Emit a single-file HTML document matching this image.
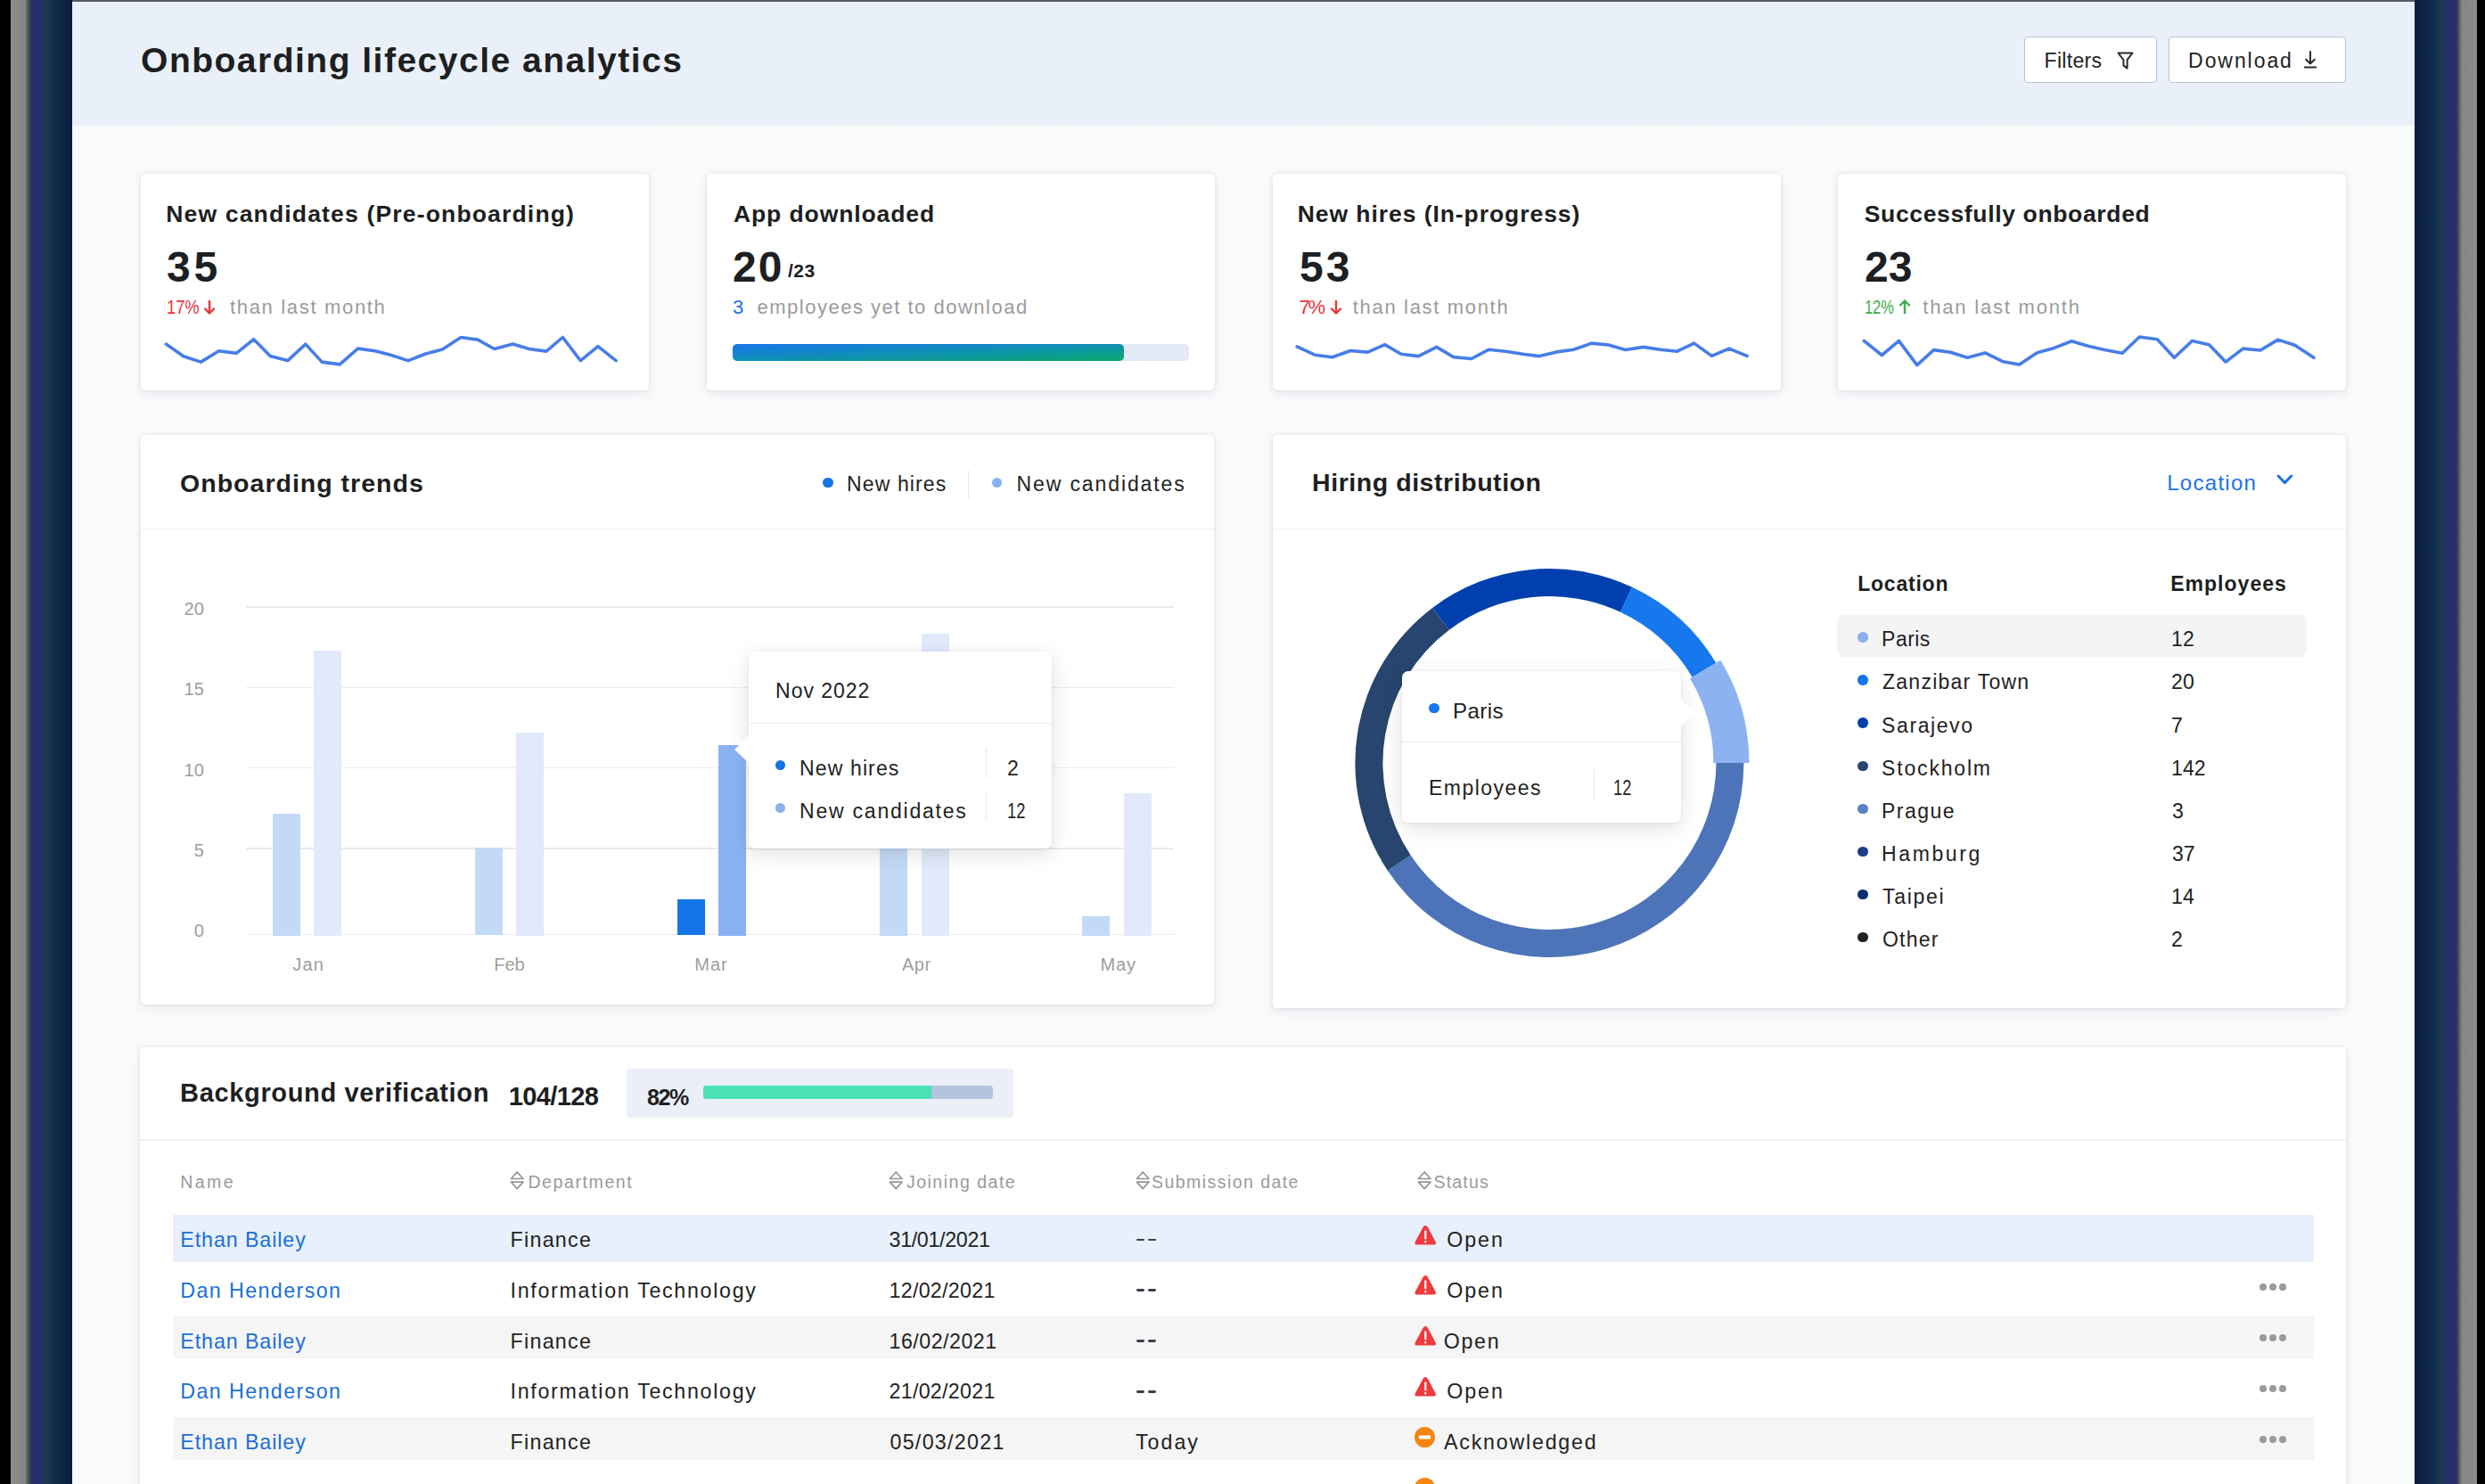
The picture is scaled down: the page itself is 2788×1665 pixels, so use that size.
<!DOCTYPE html>
<html><head><meta charset="utf-8"><style>
html,body{margin:0;padding:0;}
body{width:2788px;height:1665px;overflow:hidden;position:relative;background:#000;font-family:"Liberation Sans",sans-serif;}
.r{position:absolute;}
.t{position:absolute;line-height:1;white-space:nowrap;}
</style></head><body>
<div class="r" style="left:0;top:0;width:12px;height:1665px;background:#000"></div>
<div class="r" style="left:12px;top:0;width:69px;height:1665px;background:linear-gradient(90deg,#8c8c8c 0px,#868686 16px,#56604c 19px,#2c2e6c 23px,#272d66 33px,#183a4c 40px,#102c48 50px,#0a1c42 69px)"></div>
<div class="r" style="left:2709px;top:0;width:70px;height:1665px;background:linear-gradient(90deg,#0a1c42 0px,#102c48 20px,#183a4c 28px,#272d66 37px,#2c2e6c 47px,#56604c 50px,#868686 53px,#8c8c8c 70px)"></div>
<div class="r" style="left:2779px;top:0;width:9px;height:1665px;background:#000"></div>
<div class="r" style="left:81px;top:0px;width:2628px;height:1665px;background:#f9fafc;"></div>
<div class="r" style="left:81px;top:0px;width:2628px;height:137px;background:#eaf0f9;"></div>
<div class="r" style="left:81px;top:137px;width:2628px;height:3.5px;background:linear-gradient(#e6eaf4,#f2f5fa);"></div>
<div class="r" style="left:81px;top:0px;width:2628px;height:1.5px;background:#565b62;"></div>
<div class="t" id="t0" style="left:158.1px;top:47.99px;font-size:39px;font-weight:700;color:#1d1f22;letter-spacing:1.49px;">Onboarding lifecycle analytics</div>
<div class="r" style="left:2271px;top:40.5px;width:149px;height:52.5px;background:#fff;border:1.6px solid #b8c4d8;border-radius:4px;box-sizing:border-box;"></div>
<div class="t" id="t1" style="left:2293.6px;top:57.13px;font-size:23px;font-weight:400;color:#222;letter-spacing:0.3px;">Filters</div>
<div class="r" style="left:2433px;top:40.5px;width:199px;height:52.5px;background:#fff;border:1.6px solid #b8c4d8;border-radius:4px;box-sizing:border-box;"></div>
<div class="t" id="t2" style="left:2455.1px;top:57.13px;font-size:23px;font-weight:400;color:#222;letter-spacing:1.93px;">Download</div>
<svg class="r" style="left:2374px;top:56.5px" width="21" height="22"><path d="M2.5 2.5 H18.5 L12.6 10.2 V19.6 L8.4 16.4 V10.2 Z" fill="none" stroke="#2a2a2a" stroke-width="2" stroke-linejoin="round"/></svg>
<svg class="r" style="left:2582px;top:56px" width="20" height="22"><path d="M10 2 V15.5 M5.2 10.8 L10 15.5 L14.8 10.8 M3.8 19.6 H16.2" fill="none" stroke="#2a2a2a" stroke-width="2" stroke-linecap="round" stroke-linejoin="round"/></svg>
<div class="r" style="left:158px;top:195px;width:570px;height:242.5px;background:#fff;border-radius:5px;box-shadow:0 0 5px rgba(30,40,60,0.09),0 4px 12px rgba(30,40,60,0.07);"></div>
<div class="r" style="left:792.5px;top:195px;width:570px;height:242.5px;background:#fff;border-radius:5px;box-shadow:0 0 5px rgba(30,40,60,0.09),0 4px 12px rgba(30,40,60,0.07);"></div>
<div class="r" style="left:1427.5px;top:195px;width:570px;height:242.5px;background:#fff;border-radius:5px;box-shadow:0 0 5px rgba(30,40,60,0.09),0 4px 12px rgba(30,40,60,0.07);"></div>
<div class="r" style="left:2062px;top:195px;width:570px;height:242.5px;background:#fff;border-radius:5px;box-shadow:0 0 5px rgba(30,40,60,0.09),0 4px 12px rgba(30,40,60,0.07);"></div>
<div class="t" id="t3" style="left:186.26px;top:226.57px;font-size:26.5px;font-weight:700;color:#1d1f22;letter-spacing:1.17px;">New candidates (Pre-onboarding)</div>
<div class="t" id="t4" style="left:187.1px;top:275.67px;font-size:48px;font-weight:700;color:#1d1f22;letter-spacing:3.6px;">35</div>
<div class="t" id="t5" style="left:187.1px;top:333.98px;font-size:22px;font-weight:400;color:#e5343d;letter-spacing:0px;transform-origin:0 0;transform:scaleX(0.8322);">17%</div>
<div class="t" id="t6" style="left:258px;top:334.18px;font-size:22px;font-weight:400;color:#9b9b9b;letter-spacing:1.67px;">than last month</div>
<svg class="r" style="left:0;top:0" width="2788" height="500"><polyline points="186.3,386.1 205.9,399.8 225.4,406.1 245.6,393.7 265.2,396.3 284.7,380.7 303.2,399.6 322.8,404.6 342.8,386.1 361.2,406.1 381.2,408.9 401.4,391.1 421.0,393.7 439.0,398.5 457.9,404.6 477.5,397.0 496.4,392.0 517.2,378.5 536.1,381.1 554.6,391.5 575.3,386.1 593.7,391.5 612.9,394.1 631.3,378.5 651.3,404.6 670.9,388.7 691.1,404.6" fill="none" stroke="#477de9" stroke-width="3.6" stroke-linejoin="round" stroke-linecap="round"/></svg>
<div class="t" id="t7" style="left:823px;top:226.57px;font-size:26.5px;font-weight:700;color:#1d1f22;letter-spacing:0.9px;">App downloaded</div>
<div class="t" id="t8" style="left:822.1px;top:275.67px;font-size:48px;font-weight:700;color:#1d1f22;letter-spacing:1.98px;">20</div>
<div class="t" id="t9" style="left:884px;top:292.72px;font-size:21px;font-weight:700;color:#1d1f22;letter-spacing:0.45px;">/23</div>
<div class="t" id="t10" style="left:822.1px;top:334.18px;font-size:22px;font-weight:400;color:#1a73e8;letter-spacing:0px;">3</div>
<div class="t" id="t11" style="left:849.5px;top:334.18px;font-size:22px;font-weight:400;color:#9b9b9b;letter-spacing:1.5px;">employees yet to download</div>
<div class="r" style="left:822px;top:385.8px;width:511.5px;height:19px;background:#e3e9f5;border-radius:5px;"></div>
<div class="r" style="left:822px;top:385.8px;width:438.5px;height:19px;background:linear-gradient(to bottom right,#1774ea,#0f90b4 50%,#07aa69);border-radius:5px;"></div>
<div class="t" id="t12" style="left:1455.7px;top:226.57px;font-size:26.5px;font-weight:700;color:#1d1f22;letter-spacing:0.94px;">New hires (In-progress)</div>
<div class="t" id="t13" style="left:1458.1px;top:275.67px;font-size:48px;font-weight:700;color:#1d1f22;letter-spacing:2.88px;">53</div>
<div class="t" id="t14" style="left:1457.5px;top:333.98px;font-size:22px;font-weight:400;color:#e5343d;letter-spacing:-2.16px;">7%</div>
<div class="t" id="t15" style="left:1517.84px;top:334.18px;font-size:22px;font-weight:400;color:#9b9b9b;letter-spacing:1.67px;">than last month</div>
<svg class="r" style="left:0;top:0" width="2788" height="500"><polyline points="1455.1,388.9 1475.1,398.2 1494.8,400.8 1515.0,393.5 1534.4,395.1 1553.7,386.6 1571.9,397.3 1591.4,399.6 1611.8,389.4 1630.8,400.6 1650.8,402.5 1670.0,392.3 1689.4,394.2 1708.4,397.3 1727.0,399.6 1746.4,394.9 1765.4,392.3 1785.6,385.1 1804.6,387.0 1823.6,392.5 1843.7,389.4 1862.8,392.3 1881.7,394.2 1900.7,385.1 1920.4,399.4 1939.9,391.1 1960.1,399.4" fill="none" stroke="#477de9" stroke-width="3.6" stroke-linejoin="round" stroke-linecap="round"/></svg>
<div class="t" id="t16" style="left:2091.76px;top:226.57px;font-size:26.5px;font-weight:700;color:#1d1f22;letter-spacing:0.65px;">Successfully onboarded</div>
<div class="t" id="t17" style="left:2091.98px;top:275.67px;font-size:48px;font-weight:700;color:#1d1f22;letter-spacing:-0px;">23</div>
<div class="t" id="t18" style="left:2092.1px;top:333.98px;font-size:22px;font-weight:400;color:#3aae49;letter-spacing:0px;transform-origin:0 0;transform:scaleX(0.7420);">12%</div>
<div class="t" id="t19" style="left:2157.32px;top:334.18px;font-size:22px;font-weight:400;color:#9b9b9b;letter-spacing:1.8px;">than last month</div>
<svg class="r" style="left:0;top:0" width="2788" height="500"><polyline points="2091.3,382.4 2111.3,398.5 2130.4,382.4 2150.8,409.6 2169.5,392.6 2188.4,395.2 2207.3,401.3 2227.1,395.9 2247.1,405.7 2265.6,408.9 2285.1,395.9 2304.7,390.4 2324.2,382.8 2342.7,388.3 2361.2,392.6 2381.2,396.3 2400.3,378.0 2420.3,380.7 2439.4,401.3 2459.6,382.4 2478.5,386.7 2497.0,406.1 2516.5,391.1 2536.1,393.0 2555.7,381.1 2574.6,387.2 2595.9,401.3" fill="none" stroke="#477de9" stroke-width="3.6" stroke-linejoin="round" stroke-linecap="round"/></svg>
<svg class="r" style="left:228px;top:337px" width="14" height="16"><path d="M7 0.5 V14.5 M2 9.5 L7 14.5 L12 9.5" fill="none" stroke="#e5343d" stroke-width="2.4" stroke-linecap="round" stroke-linejoin="round"/></svg>
<svg class="r" style="left:1491.5px;top:337px" width="14" height="16"><path d="M7 0.5 V14.5 M2 9.5 L7 14.5 L12 9.5" fill="none" stroke="#e5343d" stroke-width="2.4" stroke-linecap="round" stroke-linejoin="round"/></svg>
<svg class="r" style="left:2130px;top:336px" width="14" height="16"><path d="M7 15.5 V1.5 M2 6.5 L7 1.5 L12 6.5" fill="none" stroke="#3aae49" stroke-width="2.4" stroke-linecap="round" stroke-linejoin="round"/></svg>
<div class="r" style="left:158px;top:488px;width:1204px;height:639px;background:#fff;border-radius:5px;box-shadow:0 0 5px rgba(30,40,60,0.09),0 4px 12px rgba(30,40,60,0.07);"></div>
<div class="t" id="t20" style="left:202.1px;top:527.87px;font-size:28.5px;font-weight:700;color:#1d1f22;letter-spacing:1.01px;">Onboarding trends</div>
<div class="r" style="left:923.25px;top:535.65px;width:11.5px;height:11.5px;background:#1474e8;border-radius:50%;"></div>
<div class="t" id="t21" style="left:950.1px;top:531.53px;font-size:23px;font-weight:400;color:#222;letter-spacing:1.1px;">New hires</div>
<div class="r" style="left:1086px;top:528px;width:1.2px;height:31px;background:#e6e6e6;"></div>
<div class="r" style="left:1112.85px;top:535.65px;width:11.5px;height:11.5px;background:#8ab0f0;border-radius:50%;"></div>
<div class="t" id="t22" style="left:1140.44px;top:531.53px;font-size:23px;font-weight:400;color:#222;letter-spacing:1.9px;">New candidates</div>
<div class="r" style="left:158px;top:592.5px;width:1204px;height:1.5px;background:#edf0f6;"></div>
<div class="r" style="left:275.5px;top:680.4px;width:1041.5px;height:1.3px;background:#ebebeb;"></div>
<div class="t" id="t23" style="left:228.78px;top:673.07px;font-size:20px;font-weight:400;color:#9d9d9d;letter-spacing:0px;transform:translateX(-100%);">20</div>
<div class="r" style="left:275.5px;top:770.7px;width:1041.5px;height:1.3px;background:#ebebeb;"></div>
<div class="t" id="t24" style="left:228.78px;top:763.37px;font-size:20px;font-weight:400;color:#9d9d9d;letter-spacing:0px;transform:translateX(-100%);">15</div>
<div class="r" style="left:275.5px;top:861px;width:1041.5px;height:1.3px;background:#ebebeb;"></div>
<div class="t" id="t25" style="left:228.78px;top:853.67px;font-size:20px;font-weight:400;color:#9d9d9d;letter-spacing:0px;transform:translateX(-100%);">10</div>
<div class="r" style="left:275.5px;top:951.4px;width:1041.5px;height:1.3px;background:#ebebeb;"></div>
<div class="t" id="t26" style="left:228.78px;top:944.07px;font-size:20px;font-weight:400;color:#9d9d9d;letter-spacing:0px;transform:translateX(-100%);">5</div>
<div class="r" style="left:275.5px;top:1047.9px;width:1041.5px;height:1.3px;background:#ebebeb;"></div>
<div class="t" id="t27" style="left:228.78px;top:1034.07px;font-size:20px;font-weight:400;color:#9d9d9d;letter-spacing:0px;transform:translateX(-100%);">0</div>
<div class="r" style="left:306px;top:913px;width:31px;height:136.5px;background:#c3daf7;"></div>
<div class="r" style="left:352px;top:730px;width:31px;height:319.5px;background:#e1e9fa;"></div>
<div class="r" style="left:533px;top:951.4px;width:31px;height:98.1px;background:#c3daf7;"></div>
<div class="r" style="left:579px;top:822px;width:31px;height:227.5px;background:#e1e9fa;"></div>
<div class="r" style="left:760px;top:1008.8px;width:31px;height:40.7px;background:#1474e8;"></div>
<div class="r" style="left:806px;top:836px;width:31px;height:213.5px;background:#8ab2f2;"></div>
<div class="r" style="left:987px;top:870px;width:31px;height:179.5px;background:#c3daf7;"></div>
<div class="r" style="left:1033.5px;top:711px;width:31px;height:338.5px;background:#e1e9fa;"></div>
<div class="r" style="left:1214px;top:1028px;width:31px;height:21.5px;background:#c3daf7;"></div>
<div class="r" style="left:1260.5px;top:890px;width:31px;height:159.5px;background:#e1e9fa;"></div>
<div class="t" id="t28" style="left:346.24px;top:1071.57px;font-size:20px;font-weight:400;color:#9d9d9d;letter-spacing:1.26px;transform:translateX(-50%);">Jan</div>
<div class="t" id="t29" style="left:571.5px;top:1071.57px;font-size:20px;font-weight:400;color:#9d9d9d;letter-spacing:0px;transform:translateX(-50%);">Feb</div>
<div class="t" id="t30" style="left:798.05px;top:1071.57px;font-size:20px;font-weight:400;color:#9d9d9d;letter-spacing:0.99px;transform:translateX(-50%);">Mar</div>
<div class="t" id="t31" style="left:1028.34px;top:1071.57px;font-size:20px;font-weight:400;color:#9d9d9d;letter-spacing:0.54px;transform:translateX(-50%);">Apr</div>
<div class="t" id="t32" style="left:1254.78px;top:1071.57px;font-size:20px;font-weight:400;color:#9d9d9d;letter-spacing:0.9px;transform:translateX(-50%);">May</div>
<div class="r" style="left:840px;top:731px;width:340px;height:221px;background:#fff;border-radius:7px;box-shadow:0 6px 24px rgba(0,0,0,0.12),0 1px 4px rgba(0,0,0,0.06)"></div>
<svg class="r" style="left:822px;top:823px" width="20" height="36"><path d="M19 2 L2 18 L19 34 Z" fill="#fff"/></svg>
<div class="t" id="t33" style="left:870.1px;top:763.53px;font-size:23px;font-weight:400;color:#222;letter-spacing:0.98px;">Nov 2022</div>
<div class="r" style="left:840px;top:810.5px;width:340px;height:1.5px;background:#eeeeee;"></div>
<div class="r" style="left:869.95px;top:852.65px;width:11.5px;height:11.5px;background:#1474e8;border-radius:50%;"></div>
<div class="t" id="t34" style="left:897.1px;top:850.53px;font-size:23px;font-weight:400;color:#222;letter-spacing:1.12px;">New hires</div>
<div class="r" style="left:1106px;top:839px;width:1.2px;height:34px;background:#e6e6e6;"></div>
<div class="t" id="t35" style="left:1130.1px;top:850.53px;font-size:23px;font-weight:400;color:#222;letter-spacing:0px;">2</div>
<div class="r" style="left:869.95px;top:900.85px;width:11.5px;height:11.5px;background:#8ab0f0;border-radius:50%;"></div>
<div class="t" id="t36" style="left:897.1px;top:898.53px;font-size:23px;font-weight:400;color:#222;letter-spacing:1.77px;">New candidates</div>
<div class="r" style="left:1106px;top:887px;width:1.2px;height:34px;background:#e6e6e6;"></div>
<div class="t" id="t37" style="left:1130.1px;top:898.53px;font-size:23px;font-weight:400;color:#222;letter-spacing:0px;transform-origin:0 0;transform:scaleX(0.7951);">12</div>
<div class="r" style="left:1427.5px;top:488px;width:1204.5px;height:642.5px;background:#fff;border-radius:5px;box-shadow:0 0 5px rgba(30,40,60,0.09),0 4px 12px rgba(30,40,60,0.07);"></div>
<div class="t" id="t38" style="left:1472.1px;top:526.87px;font-size:28.5px;font-weight:700;color:#1d1f22;letter-spacing:0.55px;">Hiring distribution</div>
<div class="t" id="t39" style="left:2431.2px;top:529.68px;font-size:24px;font-weight:400;color:#1a73e8;letter-spacing:1.29px;">Location</div>
<svg class="r" style="left:2550px;top:527px" width="28" height="22"><path d="M6 7 L13.4 14.6 L20.8 7" fill="none" stroke="#1a73e8" stroke-width="3" stroke-linecap="round" stroke-linejoin="round"/></svg>
<div class="r" style="left:1427.5px;top:592.5px;width:1204.5px;height:1.5px;background:#edf0f6;"></div>
<svg class="r" style="left:0;top:0" width="2788" height="1665"><path d="M1607.20 681.90 A218.00 218.00 0 0 1 1831.22 658.75 L1818.02 686.80 A187.00 187.00 0 0 0 1625.86 706.66 Z" fill="#0040ae"/><path d="M1831.22 658.75 A218.00 218.00 0 0 1 1925.26 743.72 L1898.69 759.69 A187.00 187.00 0 0 0 1818.02 686.80 Z" fill="#1778ee"/><path d="M1930.41 740.63 A224.00 224.00 0 0 1 1962.40 856.00 L1922.40 856.00 A184.00 184.00 0 0 0 1896.12 761.23 Z" fill="#8cb2f2"/><path d="M1956.40 856.00 A218.00 218.00 0 0 1 1556.82 976.64 L1582.64 959.48 A187.00 187.00 0 0 0 1925.40 856.00 Z" fill="#4d74b8"/><path d="M1556.82 976.64 A218.00 218.00 0 0 1 1607.20 681.90 L1625.86 706.66 A187.00 187.00 0 0 0 1582.64 959.48 Z" fill="#27456e"/></svg>
<div class="r" style="left:1573px;top:753px;width:313px;height:169.5px;background:#fff;border-radius:7px;box-shadow:0 6px 24px rgba(0,0,0,0.12),0 1px 4px rgba(0,0,0,0.06)"></div>
<svg class="r" style="left:1884px;top:783px" width="20" height="34"><path d="M1 1 L17 16.5 L1 32 Z" fill="#fff"/></svg>
<div class="r" style="left:1603.25px;top:788.95px;width:11.5px;height:11.5px;background:#1777ee;border-radius:50%;"></div>
<div class="t" id="t40" style="left:1630.1px;top:785.68px;font-size:24px;font-weight:400;color:#222;letter-spacing:0.45px;">Paris</div>
<div class="r" style="left:1573px;top:831.5px;width:313px;height:1.5px;background:#eeeeee;"></div>
<div class="t" id="t41" style="left:1603.1px;top:873.23px;font-size:23px;font-weight:400;color:#222;letter-spacing:1.44px;">Employees</div>
<div class="r" style="left:1788px;top:862.5px;width:1.2px;height:34px;background:#e6e6e6;"></div>
<div class="t" id="t42" style="left:1809.7px;top:873.23px;font-size:23px;font-weight:400;color:#222;letter-spacing:0px;transform-origin:0 0;transform:scaleX(0.7917);">12</div>
<div class="t" id="t43" style="left:2084.22px;top:643.93px;font-size:23px;font-weight:700;color:#1d1f22;letter-spacing:0.77px;">Location</div>
<div class="t" id="t44" style="left:2435.26px;top:643.93px;font-size:23px;font-weight:700;color:#1d1f22;letter-spacing:1.01px;">Employees</div>
<div class="r" style="left:2061px;top:689.5px;width:527px;height:47.5px;background:#f4f4f5;border-radius:7px;"></div>
<div class="r" style="left:2084.25px;top:709.25px;width:11.5px;height:11.5px;background:#8ab0f0;border-radius:50%;"></div>
<div class="t" id="t45" style="left:2111.1px;top:706.33px;font-size:23px;font-weight:400;color:#222;letter-spacing:0.45px;">Paris</div>
<div class="t" id="t46" style="left:2436.1px;top:706.33px;font-size:23px;font-weight:400;color:#222;letter-spacing:0px;">12</div>
<div class="r" style="left:2084.25px;top:757.35px;width:11.5px;height:11.5px;background:#1474e8;border-radius:50%;"></div>
<div class="t" id="t47" style="left:2112px;top:754.43px;font-size:23px;font-weight:400;color:#222;letter-spacing:1.25px;">Zanzibar Town</div>
<div class="t" id="t48" style="left:2436.1px;top:754.43px;font-size:23px;font-weight:400;color:#222;letter-spacing:0px;">20</div>
<div class="r" style="left:2084.25px;top:805.45px;width:11.5px;height:11.5px;background:#0041b0;border-radius:50%;"></div>
<div class="t" id="t49" style="left:2111.1px;top:802.53px;font-size:23px;font-weight:400;color:#222;letter-spacing:1.59px;">Sarajevo</div>
<div class="t" id="t50" style="left:2436.1px;top:802.53px;font-size:23px;font-weight:400;color:#222;letter-spacing:0px;">7</div>
<div class="r" style="left:2084.25px;top:853.55px;width:11.5px;height:11.5px;background:#27466f;border-radius:50%;"></div>
<div class="t" id="t51" style="left:2111.1px;top:850.63px;font-size:23px;font-weight:400;color:#222;letter-spacing:1.82px;">Stockholm</div>
<div class="t" id="t52" style="left:2436.1px;top:850.63px;font-size:23px;font-weight:400;color:#222;letter-spacing:0px;">142</div>
<div class="r" style="left:2084.25px;top:901.65px;width:11.5px;height:11.5px;background:#5b80c4;border-radius:50%;"></div>
<div class="t" id="t53" style="left:2111.1px;top:898.73px;font-size:23px;font-weight:400;color:#222;letter-spacing:1.44px;">Prague</div>
<div class="t" id="t54" style="left:2437px;top:898.73px;font-size:23px;font-weight:400;color:#222;letter-spacing:0px;">3</div>
<div class="r" style="left:2084.25px;top:949.75px;width:11.5px;height:11.5px;background:#1c3f8a;border-radius:50%;"></div>
<div class="t" id="t55" style="left:2111.1px;top:946.83px;font-size:23px;font-weight:400;color:#222;letter-spacing:2.58px;">Hamburg</div>
<div class="t" id="t56" style="left:2437px;top:946.83px;font-size:23px;font-weight:400;color:#222;letter-spacing:0px;">37</div>
<div class="r" style="left:2084.25px;top:997.85px;width:11.5px;height:11.5px;background:#0f2d6e;border-radius:50%;"></div>
<div class="t" id="t57" style="left:2112px;top:994.93px;font-size:23px;font-weight:400;color:#222;letter-spacing:1.69px;">Taipei</div>
<div class="t" id="t58" style="left:2436.1px;top:994.93px;font-size:23px;font-weight:400;color:#222;letter-spacing:0px;">14</div>
<div class="r" style="left:2084.25px;top:1045.95px;width:11.5px;height:11.5px;background:#222222;border-radius:50%;"></div>
<div class="t" id="t59" style="left:2112px;top:1043.03px;font-size:23px;font-weight:400;color:#222;letter-spacing:1.22px;">Other</div>
<div class="t" id="t60" style="left:2436.1px;top:1043.03px;font-size:23px;font-weight:400;color:#222;letter-spacing:0px;">2</div>
<div class="r" style="left:157px;top:1175px;width:2475px;height:600px;background:#fff;border-radius:5px;box-shadow:0 0 5px rgba(30,40,60,0.09),0 4px 12px rgba(30,40,60,0.07);"></div>
<div class="t" id="t61" style="left:202.1px;top:1211.95px;font-size:29px;font-weight:700;color:#1d1f22;letter-spacing:0.65px;">Background verification</div>
<div class="t" id="t62" style="left:570.7px;top:1215.95px;font-size:29px;font-weight:700;color:#1d1f22;letter-spacing:-0.6px;">104/128</div>
<div class="r" style="left:702.5px;top:1199px;width:434px;height:55px;background:#ebf0f8;border-radius:3px;"></div>
<div class="t" id="t63" style="left:726px;top:1218.54px;font-size:25px;font-weight:700;color:#1d1f22;letter-spacing:-1.35px;">82%</div>
<div class="r" style="left:789px;top:1218.3px;width:325px;height:15px;background:#b4c4de;border-radius:4px;"></div>
<div class="r" style="left:789px;top:1218.3px;width:256.4px;height:15px;background:#4ce2b4;border-radius:4px 1px 1px 4px;"></div>
<div class="r" style="left:157px;top:1278.2px;width:2475px;height:1.5px;background:#eef1f6;"></div>
<div class="t" id="t64" style="left:202.32px;top:1316.69px;font-size:19.5px;font-weight:400;color:#9a9a9a;letter-spacing:2.4px;">Name</div>
<svg class="r" style="left:571px;top:1313px" width="18" height="24"><path d="M2.4 9.5 L9.2 2 L16 9.5 Z M2.4 13.1 L9.2 20.6 L16 13.1 Z" fill="none" stroke="#959595" stroke-width="1.7" stroke-linejoin="round"/></svg>
<div class="t" id="t65" style="left:592.44px;top:1316.69px;font-size:19.5px;font-weight:400;color:#9a9a9a;letter-spacing:1.6px;">Department</div>
<svg class="r" style="left:996px;top:1313px" width="18" height="24"><path d="M2.4 9.5 L9.2 2 L16 9.5 Z M2.4 13.1 L9.2 20.6 L16 13.1 Z" fill="none" stroke="#959595" stroke-width="1.7" stroke-linejoin="round"/></svg>
<div class="t" id="t66" style="left:1016.88px;top:1316.69px;font-size:19.5px;font-weight:400;color:#9a9a9a;letter-spacing:1.51px;">Joining date</div>
<svg class="r" style="left:1272.5px;top:1313px" width="18" height="24"><path d="M2.4 9.5 L9.2 2 L16 9.5 Z M2.4 13.1 L9.2 20.6 L16 13.1 Z" fill="none" stroke="#959595" stroke-width="1.7" stroke-linejoin="round"/></svg>
<div class="t" id="t67" style="left:1292.1px;top:1316.69px;font-size:19.5px;font-weight:400;color:#9a9a9a;letter-spacing:1.44px;">Submission date</div>
<svg class="r" style="left:1588.5px;top:1313px" width="18" height="24"><path d="M2.4 9.5 L9.2 2 L16 9.5 Z M2.4 13.1 L9.2 20.6 L16 13.1 Z" fill="none" stroke="#959595" stroke-width="1.7" stroke-linejoin="round"/></svg>
<div class="t" id="t68" style="left:1608.58px;top:1316.69px;font-size:19.5px;font-weight:400;color:#9a9a9a;letter-spacing:1.16px;">Status</div>
<div class="r" style="left:194px;top:1362.7px;width:2402px;height:53.7px;background:#e7f0fc;"></div>
<div class="r" style="left:194px;top:1475.8px;width:2402px;height:48.2px;background:#f5f5f5;"></div>
<div class="r" style="left:194px;top:1589.5px;width:2402px;height:48px;background:#f5f5f5;"></div>
<div class="t" id="t69" style="left:202.32px;top:1379.76px;font-size:23.2px;font-weight:400;color:#1a6fd6;letter-spacing:0.93px;">Ethan Bailey</div>
<div class="t" id="t70" style="left:572.6px;top:1379.76px;font-size:23.2px;font-weight:400;color:#222;letter-spacing:1.29px;">Finance</div>
<div class="t" id="t71" style="left:997.54px;top:1379.76px;font-size:23.2px;font-weight:400;color:#222;letter-spacing:-0.3px;">31/01/2021</div>
<div class="r" style="left:1274.7px;top:1389.5px;width:9.2px;height:2.8px;background:#3a414b;border-radius:1.4px;"></div>
<div class="r" style="left:1287.5px;top:1389.5px;width:9.2px;height:2.8px;background:#3a414b;border-radius:1.4px;"></div>
<svg class="r" style="left:1586px;top:1373.5px" width="27" height="25"><path d="M13.2 1 Q14.8 1 15.8 2.8 L24.6 19.2 Q25.8 22.6 22.6 22.6 H3.8 Q0.6 22.6 1.8 19.2 L10.6 2.8 Q11.6 1 13.2 1 Z" fill="#f03a3d"/><rect x="12.1" y="6.5" width="2.3" height="10" rx="1" fill="#fff"/><rect x="12.1" y="18.1" width="2.3" height="2.3" rx="1" fill="#fff"/></svg>
<div class="t" id="t72" style="left:1623.16px;top:1379.76px;font-size:23.2px;font-weight:400;color:#222;letter-spacing:1.98px;">Open</div>
<div class="t" id="t73" style="left:202.32px;top:1436.66px;font-size:23.2px;font-weight:400;color:#1a6fd6;letter-spacing:1.43px;">Dan Henderson</div>
<div class="t" id="t74" style="left:572.6px;top:1436.66px;font-size:23.2px;font-weight:400;color:#222;letter-spacing:1.71px;">Information Technology</div>
<div class="t" id="t75" style="left:997.54px;top:1436.66px;font-size:23.2px;font-weight:400;color:#222;letter-spacing:0.3px;">12/02/2021</div>
<div class="r" style="left:1274.7px;top:1446.4px;width:9.2px;height:2.8px;background:#3a414b;border-radius:1.4px;"></div>
<div class="r" style="left:1287.5px;top:1446.4px;width:9.2px;height:2.8px;background:#3a414b;border-radius:1.4px;"></div>
<svg class="r" style="left:1586px;top:1430.4px" width="27" height="25"><path d="M13.2 1 Q14.8 1 15.8 2.8 L24.6 19.2 Q25.8 22.6 22.6 22.6 H3.8 Q0.6 22.6 1.8 19.2 L10.6 2.8 Q11.6 1 13.2 1 Z" fill="#f03a3d"/><rect x="12.1" y="6.5" width="2.3" height="10" rx="1" fill="#fff"/><rect x="12.1" y="18.1" width="2.3" height="2.3" rx="1" fill="#fff"/></svg>
<div class="t" id="t76" style="left:1623.16px;top:1436.66px;font-size:23.2px;font-weight:400;color:#222;letter-spacing:1.98px;">Open</div>
<div class="r" style="left:2534.8px;top:1439.8px;width:8px;height:8px;background:#9a9a9a;border-radius:50%;"></div>
<div class="r" style="left:2546.1px;top:1439.8px;width:8px;height:8px;background:#9a9a9a;border-radius:50%;"></div>
<div class="r" style="left:2557.4px;top:1439.8px;width:8px;height:8px;background:#9a9a9a;border-radius:50%;"></div>
<div class="t" id="t77" style="left:202.32px;top:1493.56px;font-size:23.2px;font-weight:400;color:#1a6fd6;letter-spacing:0.93px;">Ethan Bailey</div>
<div class="t" id="t78" style="left:572.6px;top:1493.56px;font-size:23.2px;font-weight:400;color:#222;letter-spacing:1.29px;">Finance</div>
<div class="t" id="t79" style="left:997.54px;top:1493.56px;font-size:23.2px;font-weight:400;color:#222;letter-spacing:0.5px;">16/02/2021</div>
<div class="r" style="left:1274.7px;top:1503.3px;width:9.2px;height:2.8px;background:#3a414b;border-radius:1.4px;"></div>
<div class="r" style="left:1287.5px;top:1503.3px;width:9.2px;height:2.8px;background:#3a414b;border-radius:1.4px;"></div>
<svg class="r" style="left:1586px;top:1487.3px" width="27" height="25"><path d="M13.2 1 Q14.8 1 15.8 2.8 L24.6 19.2 Q25.8 22.6 22.6 22.6 H3.8 Q0.6 22.6 1.8 19.2 L10.6 2.8 Q11.6 1 13.2 1 Z" fill="#f03a3d"/><rect x="12.1" y="6.5" width="2.3" height="10" rx="1" fill="#fff"/><rect x="12.1" y="18.1" width="2.3" height="2.3" rx="1" fill="#fff"/></svg>
<div class="t" id="t80" style="left:1619.78px;top:1493.56px;font-size:23.2px;font-weight:400;color:#222;letter-spacing:1.68px;">Open</div>
<div class="r" style="left:2534.8px;top:1496.7px;width:8px;height:8px;background:#9a9a9a;border-radius:50%;"></div>
<div class="r" style="left:2546.1px;top:1496.7px;width:8px;height:8px;background:#9a9a9a;border-radius:50%;"></div>
<div class="r" style="left:2557.4px;top:1496.7px;width:8px;height:8px;background:#9a9a9a;border-radius:50%;"></div>
<div class="t" id="t81" style="left:202.32px;top:1550.46px;font-size:23.2px;font-weight:400;color:#1a6fd6;letter-spacing:1.43px;">Dan Henderson</div>
<div class="t" id="t82" style="left:572.6px;top:1550.46px;font-size:23.2px;font-weight:400;color:#222;letter-spacing:1.71px;">Information Technology</div>
<div class="t" id="t83" style="left:997.54px;top:1550.46px;font-size:23.2px;font-weight:400;color:#222;letter-spacing:0.3px;">21/02/2021</div>
<div class="r" style="left:1274.7px;top:1560.2px;width:9.2px;height:2.8px;background:#3a414b;border-radius:1.4px;"></div>
<div class="r" style="left:1287.5px;top:1560.2px;width:9.2px;height:2.8px;background:#3a414b;border-radius:1.4px;"></div>
<svg class="r" style="left:1586px;top:1544.2px" width="27" height="25"><path d="M13.2 1 Q14.8 1 15.8 2.8 L24.6 19.2 Q25.8 22.6 22.6 22.6 H3.8 Q0.6 22.6 1.8 19.2 L10.6 2.8 Q11.6 1 13.2 1 Z" fill="#f03a3d"/><rect x="12.1" y="6.5" width="2.3" height="10" rx="1" fill="#fff"/><rect x="12.1" y="18.1" width="2.3" height="2.3" rx="1" fill="#fff"/></svg>
<div class="t" id="t84" style="left:1623.16px;top:1550.46px;font-size:23.2px;font-weight:400;color:#222;letter-spacing:1.98px;">Open</div>
<div class="r" style="left:2534.8px;top:1553.6px;width:8px;height:8px;background:#9a9a9a;border-radius:50%;"></div>
<div class="r" style="left:2546.1px;top:1553.6px;width:8px;height:8px;background:#9a9a9a;border-radius:50%;"></div>
<div class="r" style="left:2557.4px;top:1553.6px;width:8px;height:8px;background:#9a9a9a;border-radius:50%;"></div>
<div class="t" id="t85" style="left:202.32px;top:1607.36px;font-size:23.2px;font-weight:400;color:#1a6fd6;letter-spacing:0.93px;">Ethan Bailey</div>
<div class="t" id="t86" style="left:572.6px;top:1607.36px;font-size:23.2px;font-weight:400;color:#222;letter-spacing:1.29px;">Finance</div>
<div class="t" id="t87" style="left:998.44px;top:1607.36px;font-size:23.2px;font-weight:400;color:#222;letter-spacing:1.32px;">05/03/2021</div>
<div class="t" id="t88" style="left:1274px;top:1607.36px;font-size:23.2px;font-weight:400;color:#222;letter-spacing:2.02px;">Today</div>
<svg class="r" style="left:1587px;top:1601.1px" width="24" height="24"><circle cx="11.5" cy="11.5" r="11.5" fill="#f5850f"/><rect x="5" y="9.5" width="13" height="4" rx="0.5" fill="#fff"/></svg>
<div class="t" id="t89" style="left:1620px;top:1607.36px;font-size:23.2px;font-weight:400;color:#222;letter-spacing:1.8px;">Acknowledged</div>
<div class="r" style="left:2534.8px;top:1610.5px;width:8px;height:8px;background:#9a9a9a;border-radius:50%;"></div>
<div class="r" style="left:2546.1px;top:1610.5px;width:8px;height:8px;background:#9a9a9a;border-radius:50%;"></div>
<div class="r" style="left:2557.4px;top:1610.5px;width:8px;height:8px;background:#9a9a9a;border-radius:50%;"></div>
<div class="t" id="t90" style="left:203.4px;top:1664.26px;font-size:23.2px;font-weight:400;color:#1a6fd6;letter-spacing:0px;">Dan Henderson</div>
<div class="t" id="t91" style="left:573.5px;top:1664.26px;font-size:23.2px;font-weight:400;color:#222;letter-spacing:0px;">Information Technology</div>
<div class="t" id="t92" style="left:998.8px;top:1664.26px;font-size:23.2px;font-weight:400;color:#222;letter-spacing:0px;">12/03/2021</div>
<div class="t" id="t93" style="left:1274px;top:1664.26px;font-size:23.2px;font-weight:400;color:#222;letter-spacing:0px;">Today</div>
<svg class="r" style="left:1587px;top:1658px" width="24" height="24"><circle cx="11.5" cy="11.5" r="11.5" fill="#f5850f"/><rect x="5" y="9.5" width="13" height="4" rx="0.5" fill="#fff"/></svg>
<div class="t" id="t94" style="left:1620px;top:1664.26px;font-size:23.2px;font-weight:400;color:#222;letter-spacing:0px;">Acknowledged</div>
<div class="r" style="left:2534.8px;top:1667.4px;width:8px;height:8px;background:#9a9a9a;border-radius:50%;"></div>
<div class="r" style="left:2546.1px;top:1667.4px;width:8px;height:8px;background:#9a9a9a;border-radius:50%;"></div>
<div class="r" style="left:2557.4px;top:1667.4px;width:8px;height:8px;background:#9a9a9a;border-radius:50%;"></div>
</body></html>
